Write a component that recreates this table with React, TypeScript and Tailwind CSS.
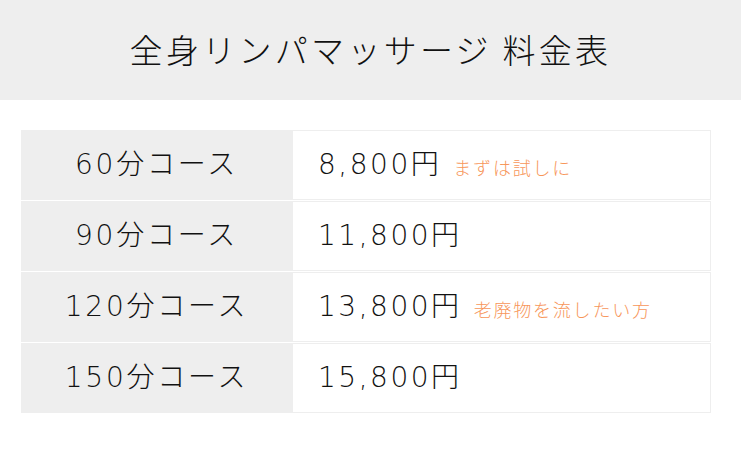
const rows = [
  { course: '60分コース', price: '8,800円', note: 'まずは試しに' },
  { course: '90分コース', price: '11,800円', note: '' },
  { course: '120分コース', price: '13,800円', note: '老廃物を流したい方' },
  { course: '150分コース', price: '15,800円', note: '' },
];

export default function App() {
  return (
    <div className="w-[741px] h-[455px] bg-white text-[#111] font-['DejaVu_Sans','Noto_Sans_CJK_JP',sans-serif]">
      <div className="h-[100px] bg-[#eeeeee] flex items-center justify-center">
        <h1 className="text-[33px] font-light tracking-[0.1em] font-['Noto_Sans_CJK_JP',sans-serif]">全身リンパマッサージ 料金表</h1>
      </div>
      <div className="mt-[30px] ml-[21px] w-[690px] flex flex-col gap-px">
        {rows.map((r) => (
          <div key={r.course} className="flex h-[70px]">
            <div className="w-[271px] bg-[#eeeeee] flex items-center justify-center text-[28px] font-light tracking-[0.1em]">
              {r.course}
            </div>
            <div className="flex-1 border border-[#eeeeee] flex items-center pl-[25px]">
              <span className="text-[28px] font-light tracking-[0.09em]">{r.price}</span>
              {r.note && <span className="ml-[12px] mt-[4px] text-[18px] font-light tracking-[0.1em] text-[#f7965a] font-['Noto_Sans_CJK_JP',sans-serif]">{r.note}</span>}
            </div>
          </div>
        ))}
      </div>
    </div>
  );
}
